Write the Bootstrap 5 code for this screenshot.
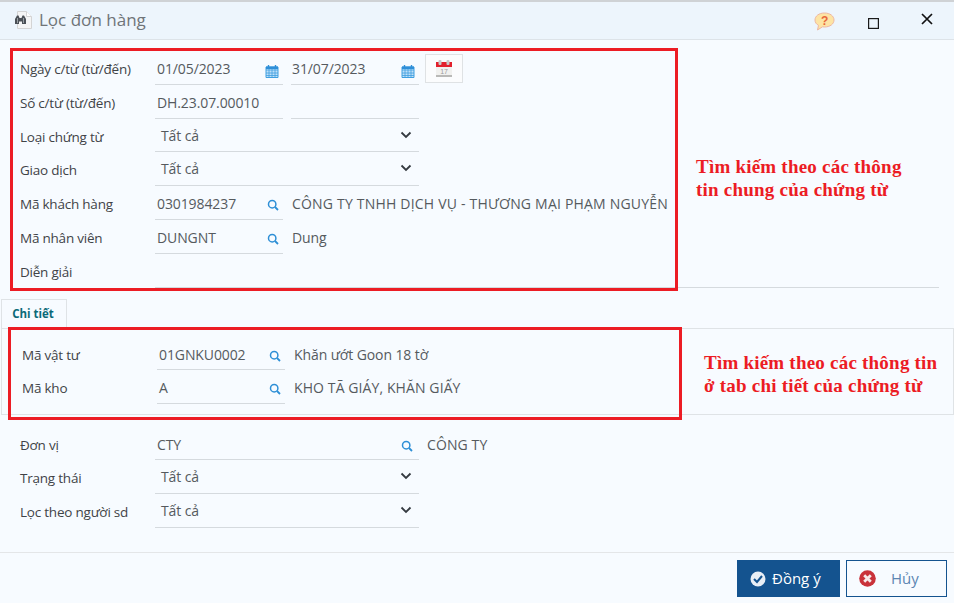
<!DOCTYPE html>
<html lang="vi">
<head>
<meta charset="utf-8">
<title>Lọc đơn hàng</title>
<link href="https://cdn.jsdelivr.net/npm/bootstrap@5.3.0/dist/css/bootstrap.min.css" rel="stylesheet">
<style>
html,body{height:603px;overflow:hidden}
body{background:#f7fbff;font-family:"Open Sans","Noto Sans",sans-serif;font-size:13.5px;color:#333;position:relative;letter-spacing:-.1px}
.dlg-head{height:40px;background:#edf5fc;border-top:2px solid #cfd2d5;border-bottom:1px solid #dde3e8;padding:0 13px 2px 14px}
.dlg-title{font-size:17px;color:#6f7478;margin-left:6px;letter-spacing:0}
.help-ic{margin-top:3px}
.form-zone{padding:11px 15px 0 20px}
.f-row{height:33.8px;display:flex;align-items:stretch}
.f-label{width:135px;flex:none;padding-top:9px;line-height:18px;color:#3f4347;letter-spacing:-.22px}
.f-box{width:128px;flex:none;border-bottom:1px solid #d5dade;display:flex;justify-content:space-between;padding:9px 4px 0 2px;line-height:18px;color:#555a5e;font-size:14px}
.f-box.wide2{margin-left:8px;padding-left:1px}
.f-box.sel{width:264px;padding:8px 7px 0 6px}
.f-box.long{flex:1}
.f-box.unit-box{padding:9px 6px 0 2px}
.f-name{margin-left:9px;padding-top:9px;line-height:18px;color:#555a5e;font-size:14px;white-space:nowrap}
.f-name.caps{letter-spacing:.1px}
.f-name.caps-long{letter-spacing:.2px}
.ic-in{margin-top:4px;flex:none}
.ic-chev{margin-top:4px;flex:none}
.cal-btn{width:38px;height:29px;margin-left:6px;margin-top:3px;border:1px solid #dfe2e4;background:#fbfcfd;display:flex;align-items:center;justify-content:center}
.tab-strip{margin-top:11px;padding-left:1px;height:29px;display:flex}
.tab-one{width:66px;height:29px;border:1px solid #dfe3e6;border-bottom:0;background:#f7fbff;color:#0b6a78;font-weight:700;font-size:11.5px;text-align:center;line-height:27px;letter-spacing:0;padding-right:2px}
.tab-body{margin-left:1px;border:1px solid #dfe3e6;height:87px;padding:8px 0 0 20px}
.after-tab{padding:12px 15px 0 20px}
.dlg-foot{position:absolute;left:0;right:0;top:552px;height:51px;border-top:1px solid #e4e6e8;padding:7px 7px 0 0;gap:6px}
.act-ok,.act-no{height:37px;font-size:15px;display:flex;align-items:center;border-radius:0;padding:0}
.act-ok{width:103px;background:#14538f;color:#fff;border:0;padding-left:13px;gap:6px}
.act-no{width:101px;background:#f7fbff;color:#5c86b3;border:1px solid #14538f;padding-left:12px;gap:15px}
.mark-box{position:absolute;border:3px solid #ec1c24}
.mark-a{left:10px;top:48px;width:668px;height:243px}
.mark-b{left:8px;top:327px;width:674px;height:93px}
.note{position:absolute;font-family:"Liberation Serif",serif;font-weight:700;color:#ec1c24;font-size:19px;line-height:23px;letter-spacing:.22px;white-space:nowrap}
.note-a{left:696px;top:155px}
.note-b{left:704px;top:351px}
</style>
</head>
<body>
<div class="dlg-head d-flex align-items-center">
  <svg width="19" height="20" viewBox="0 0 19 20"><path d="M3.500 1.500h9l5 5v12h-14z" fill="#f5f5f5" stroke="#d4d4d4"/><path d="M12.500 1.500v5h5" fill="#fff" stroke="#d4d4d4"/><path d="M1 14v-5l2-3.500h1.500l1 2.500h2l1-2.500H10l2 3.500v5H8v-2.500H5V14z" fill="#4c5157"/><path d="M3.500 8v5M9.500 8v5" stroke="#9aa0a5"/></svg>
  <span class="dlg-title">Lọc đơn hàng</span>
  <svg class="ms-auto help-ic" width="21" height="19" viewBox="0 0 21 19"><path d="M10.500 1C5 1 1 4 1 8c0 2.400 1.300 4.200 3.500 5.300L3.500 18l5-3.200c.7.1 1.300.2 2 .2 5.500 0 9.500-3 9.500-7s-4-7-9.500-7z" fill="#fde4a4" stroke="#eeb7a0"/><text x="10.500" y="13" text-anchor="middle" font-family="Liberation Sans,sans-serif" font-weight="700" font-size="12" fill="#e8663a">?</text></svg>
  <svg width="11" height="11" viewBox="0 0 11 11" style="margin:8px 0 0 33px"><rect x=".6" y=".6" width="9.800" height="9.800" fill="none" stroke="#1a1a1a" stroke-width="1.200"/></svg>
  <svg width="12" height="12" viewBox="0 0 12 12" style="margin:-1px 8px 0 42px"><path d="M1 1l10 10M11 1L1 11" stroke="#111" stroke-width="1.700"/></svg>
</div>

<svg width="0" height="0" class="position-absolute">
  <defs>
    <symbol id="i-cal" viewBox="0 0 14 14"><path d="M1 3h12v10.500H1z" fill="#bfe0f8" stroke="#3f9fe0"/><path d="M1 6h12M1 9h12M1 11.500h12M4 4v9M7 4v9M10 4v9" stroke="#3f9fe0" stroke-width=".8"/><path d="M1 2.500h12V5H1z" fill="#2f8fd8"/><path d="M3.500 1v3M10.500 1v3" stroke="#2f8fd8" stroke-width="1.400"/></symbol>
    <symbol id="i-find" viewBox="0 0 12 12"><circle cx="5.200" cy="5.200" r="3.700" fill="none" stroke="#2e8fd6" stroke-width="1.500"/><path d="M8 8l3 3" stroke="#2e8fd6" stroke-width="1.800"/></symbol>
    <symbol id="i-chev" viewBox="0 0 12 8"><path d="M1.500 1.500L6 6l4.500-4.500" fill="none" stroke="#343a40" stroke-width="1.800"/></symbol>
  </defs>
</svg>

<div class="form-zone">
  <div class="f-row"><div class="f-label">Ngày c/từ (từ/đến)</div>
    <div class="f-box"><span>01/05/2023</span><svg class="ic-in" width="14" height="14"><use href="#i-cal"/></svg></div>
    <div class="f-box wide2"><span>31/07/2023</span><svg class="ic-in" width="14" height="14"><use href="#i-cal"/></svg></div>
    <div class="cal-btn"><svg width="18" height="19" viewBox="0 0 18 19"><path d="M1 3h16v15H1z" fill="#f1f1ef"/><path d="M1 16h16v2H1z" fill="#b9b9b7"/><path d="M1 3h16v5H1z" fill="#e2202c"/><rect x="3.500" y="1" width="3" height="5" rx="1" fill="#c9c9c9"/><rect x="11.500" y="1" width="3" height="5" rx="1" fill="#c9c9c9"/><text x="9" y="14.500" text-anchor="middle" font-size="7" font-family="Liberation Sans,sans-serif" fill="#9b9b9b">17</text></svg></div>
  </div>
  <div class="f-row"><div class="f-label">Số c/từ (từ/đến)</div>
    <div class="f-box"><span>DH.23.07.00010</span></div>
    <div class="f-box wide2"></div>
  </div>
  <div class="f-row"><div class="f-label">Loại chứng từ</div>
    <div class="f-box sel"><span>Tất cả</span><svg class="ic-chev" width="12" height="8"><use href="#i-chev"/></svg></div>
  </div>
  <div class="f-row"><div class="f-label">Giao dịch</div>
    <div class="f-box sel"><span>Tất cả</span><svg class="ic-chev" width="12" height="8"><use href="#i-chev"/></svg></div>
  </div>
  <div class="f-row"><div class="f-label">Mã khách hàng</div>
    <div class="f-box"><span>0301984237</span><svg class="ic-in" width="12" height="12"><use href="#i-find"/></svg></div>
    <div class="f-name caps-long">CÔNG TY TNHH DỊCH VỤ - THƯƠNG MẠI PHẠM NGUYỄN</div>
  </div>
  <div class="f-row"><div class="f-label">Mã nhân viên</div>
    <div class="f-box"><span>DUNGNT</span><svg class="ic-in" width="12" height="12"><use href="#i-find"/></svg></div>
    <div class="f-name">Dung</div>
  </div>
  <div class="f-row"><div class="f-label">Diễn giải</div><div class="f-box long"></div></div>
</div>

<div class="tab-strip"><div class="tab-one">Chi tiết</div></div>
<div class="tab-body">
  <div class="f-row"><div class="f-label">Mã vật tư</div>
    <div class="f-box"><span>01GNKU0002</span><svg class="ic-in" width="12" height="12"><use href="#i-find"/></svg></div>
    <div class="f-name">Khăn ướt Goon 18 tờ</div>
  </div>
  <div class="f-row"><div class="f-label">Mã kho</div>
    <div class="f-box"><span>A</span><svg class="ic-in" width="12" height="12"><use href="#i-find"/></svg></div>
    <div class="f-name caps">KHO TÃ GIÁY, KHĂN GIẤY</div>
  </div>
</div>

<div class="after-tab">
  <div class="f-row"><div class="f-label">Đơn vị</div>
    <div class="f-box sel unit-box"><span>CTY</span><svg class="ic-in" width="12" height="12"><use href="#i-find"/></svg></div>
    <div class="f-name caps ms-2">CÔNG TY</div>
  </div>
  <div class="f-row"><div class="f-label">Trạng thái</div>
    <div class="f-box sel"><span>Tất cả</span><svg class="ic-chev" width="12" height="8"><use href="#i-chev"/></svg></div>
  </div>
  <div class="f-row"><div class="f-label">Lọc theo người sd</div>
    <div class="f-box sel"><span>Tất cả</span><svg class="ic-chev" width="12" height="8"><use href="#i-chev"/></svg></div>
  </div>
</div>

<div class="dlg-foot d-flex justify-content-end">
  <button type="button" class="btn act-ok"><svg width="16" height="16" viewBox="0 0 16 16"><circle cx="8" cy="8" r="7.500" fill="#e8eef5"/><path d="M4 8l3 3 5-6" fill="none" stroke="#14538f" stroke-width="2"/></svg>Đồng ý</button>
  <button type="button" class="btn act-no"><svg width="17" height="17" viewBox="0 0 17 17"><circle cx="8.500" cy="8.500" r="8.300" fill="#c9323a"/><path d="M5.200 5.200l6.600 6.600M11.800 5.200l-6.600 6.600" stroke="#f6eaea" stroke-width="2.800"/></svg>Hủy</button>
</div>

<div class="mark-box mark-a"></div>
<div class="mark-box mark-b"></div>
<div class="note note-a">Tìm kiếm theo các thông<br>tin chung của chứng từ</div>
<div class="note note-b">Tìm kiếm theo các thông tin<br>ở tab chi tiết của chứng từ</div>
</body>
</html>
